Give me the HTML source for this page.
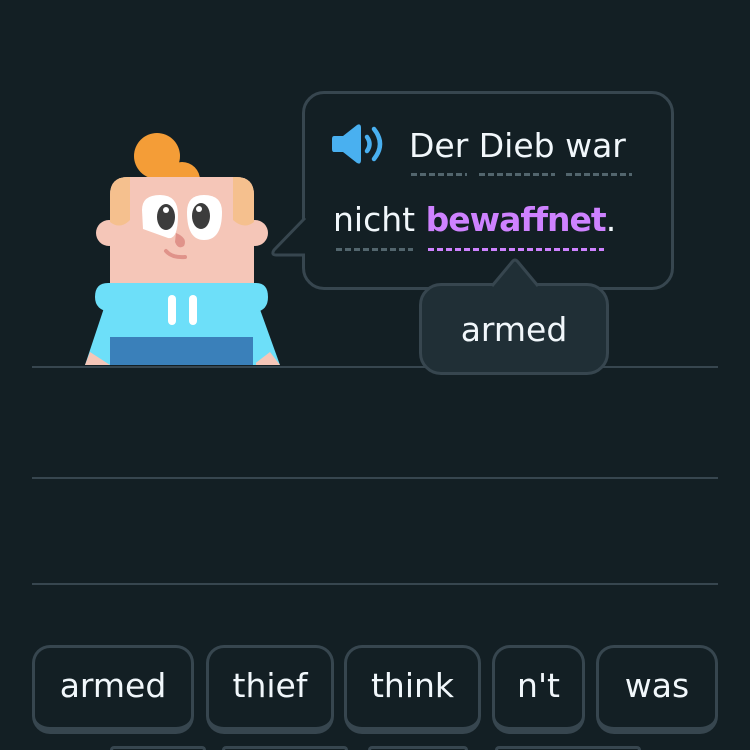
<!DOCTYPE html>
<html style="width:750px;height:750px;overflow:hidden"><head><meta charset="utf-8"><style>
html,body{margin:0;width:750px;height:750px;overflow:hidden}
body{background:#131f24;position:relative;font-family:"DejaVu Sans","Liberation Sans",sans-serif;color:#f1f7fb}
.line{position:absolute;left:32px;width:686px;height:2px;background:#37464f}
.bubble{position:absolute;left:302px;top:91px;width:366px;height:193px;border:3px solid #37464f;border-radius:22px;background:#131f24}
.t{position:absolute;font-size:33px;white-space:nowrap}
.dot{position:absolute;height:3px;background:repeating-linear-gradient(90deg,#52656d 0 6px,transparent 6px 9px)}
.btn{position:absolute;top:645px;border:3px solid #37464f;border-bottom-width:7px;border-radius:18px;box-sizing:border-box;height:89px;font-size:33px;display:flex;align-items:center;justify-content:center;padding-bottom:4px}
.b2{position:absolute;top:746px;height:4px;box-sizing:border-box;border:3px solid #37464f;border-bottom:0;border-radius:18px 18px 0 0}
</style></head><body>
<div class="line" style="top:366px"></div>
<div class="line" style="top:477px"></div>
<div class="line" style="top:583px"></div>

<svg style="position:absolute;left:0;top:0" width="750" height="370">
<circle cx="157" cy="156" r="23" fill="#f49d37"/>
<circle cx="182" cy="180" r="18" fill="#f49d37"/>
<polygon points="110,290 85,365 115,365" fill="#6ddff9"/>
<polygon points="253,290 280,365 248,365" fill="#6ddff9"/>
<polygon points="90,352 85,365 110,365" fill="#f5c6b8"/>
<polygon points="270,352 280,365 253,365" fill="#f5c6b8"/>
<circle cx="109" cy="233" r="13" fill="#f5c6b8"/>
<circle cx="255" cy="233" r="13" fill="#f5c6b8"/>
<path d="M110,290 V195 Q110,177 128,177 H236 Q254,177 254,195 V290Z" fill="#f5c6b8"/>
<path d="M110,222 V195 Q110,177 128,177 H130 V220 Q120,230 110,222Z" fill="#f5c08e"/>
<path d="M254,222 V195 Q254,177 236,177 H233 V220 Q244,230 254,222Z" fill="#f5c08e"/>
<path d="M142,210 Q142,195 160,195 Q178,195 178,215 Q178,240 168,238 L143,229Z" fill="#fff"/>
<path d="M187,212 Q187,195 204,195 Q222,195 222,212 Q222,240 204,240 Q187,240 187,212Z" fill="#fff"/>
<ellipse cx="166" cy="217" rx="9" ry="13" fill="#3c3c3c"/>
<ellipse cx="201" cy="216" rx="9" ry="13" fill="#3c3c3c"/>
<circle cx="166" cy="210" r="3" fill="#fff"/><circle cx="199" cy="209" r="3" fill="#fff"/>
<path d="M176,233 Q188,238 184,246 Q178,250 175,242Z" fill="#e0938a"/>
<path d="M166,251 Q172,258 185,257" stroke="#e0938a" stroke-width="4" fill="none" stroke-linecap="round"/>
<path d="M108,283 H256 Q268,283 268,297 Q268,310 256,312 V365 H110 V312 Q95,310 95,297 Q95,283 108,283Z" fill="#6ddff9"/>
<rect x="110" y="337" width="143" height="28" fill="#3a80ba"/>
<rect x="168" y="295" width="8" height="30" rx="4" fill="#fff"/>
<rect x="189" y="295" width="8" height="30" rx="4" fill="#fff"/>
</svg>

<div class="bubble"></div>
<svg style="position:absolute;left:268px;top:210px" width="40" height="60"><path d="M37,8 L6,40 Q3,45 8,45 L37,45" fill="#131f24" stroke="#37464f" stroke-width="3" stroke-linejoin="round"/></svg>
<svg style="position:absolute;left:331px;top:123px" width="56" height="44"><path d="M3,13 H12 L26,2 Q30,0 30,5 V37 Q30,42 26,40 L12,29 H3 Q1,29 1,26 V16 Q1,13 3,13Z" fill="#49b0f0"/><path d="M36,14 Q41,21 36,28" stroke="#49b0f0" stroke-width="4.5" fill="none" stroke-linecap="round"/><path d="M43,6 Q55,21 43,36" stroke="#49b0f0" stroke-width="4.5" fill="none" stroke-linecap="round"/></svg>
<div class="t" style="left:409px;top:126px">Der Dieb war</div>
<div class="dot" style="left:411px;top:173px;width:56px"></div>
<div class="dot" style="left:479px;top:173px;width:76px"></div>
<div class="dot" style="left:566px;top:173px;width:66px"></div>
<div class="t" style="left:333px;top:200px">nicht <b style="color:#ce82ff;letter-spacing:-1px">bewaffnet</b>.</div>
<div class="dot" style="left:336px;top:248px;width:77px"></div>
<div class="dot" style="left:428px;top:248px;width:176px;background:repeating-linear-gradient(90deg,#ce82ff 0 6px,transparent 6px 9px)"></div>

<div style="position:absolute;left:419px;top:283px;width:184px;height:86px;border:3px solid #37464f;border-radius:22px;background:#202f36;display:flex;align-items:center;justify-content:center;font-size:33px">armed</div>
<svg style="position:absolute;left:490px;top:255px" width="52" height="34"><path d="M2,31 L22,7 Q25,3 28,7 L48,31" fill="#202f36" stroke="#37464f" stroke-width="3" stroke-linejoin="round"/></svg>

<div class="btn" style="left:32px;width:162px">armed</div>
<div class="btn" style="left:206px;width:128px">thief</div>
<div class="btn" style="left:344px;width:137px">think</div>
<div class="btn" style="left:492px;width:93px">n't</div>
<div class="btn" style="left:596px;width:122px">was</div>
<div class="b2" style="left:110px;width:96px"></div>
<div class="b2" style="left:222px;width:126px"></div>
<div class="b2" style="left:368px;width:100px"></div>
<div class="b2" style="left:495px;width:146px"></div>
</body></html>
